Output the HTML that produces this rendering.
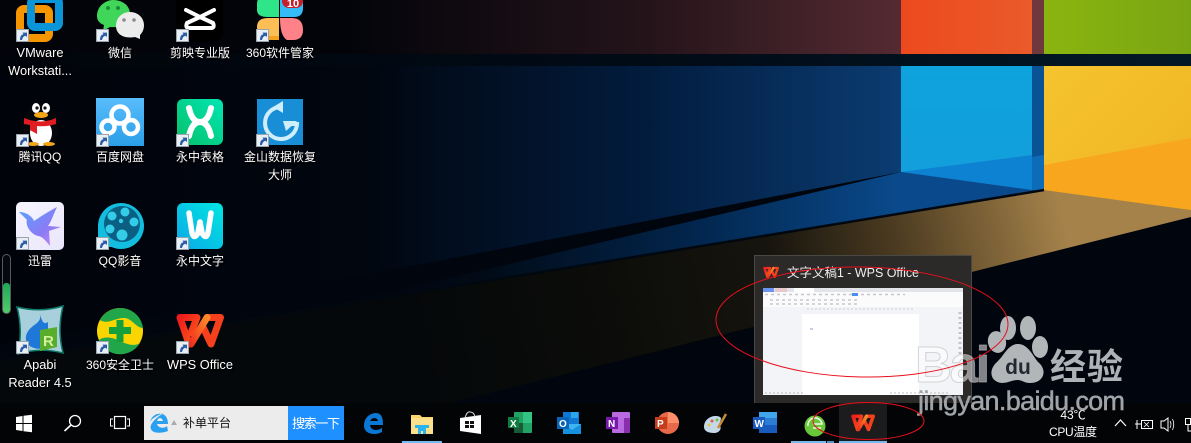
<!DOCTYPE html>
<html><head><meta charset="utf-8">
<style>
html,body{margin:0;padding:0;background:#02040a}
#r{position:relative;width:1191px;height:443px;overflow:hidden}
#r svg{position:absolute;left:0;top:0}
.l{position:absolute;width:80px;text-align:center;color:#fff;font:12px/18px "Liberation Sans","Noto Sans CJK SC",sans-serif;text-shadow:0 1px 2px #000,1px 1px 1px #000}
.e{font-size:12.8px}
</style></head><body><div id="r">
<svg width="1191" height="443" viewBox="0 0 1191 443" font-family="'Liberation Sans','Noto Sans CJK SC',sans-serif">
<defs>
<linearGradient id="w1" x1="0" x2="1" y1="0" y2="0"><stop offset="0" stop-color="#02040a"/><stop offset=".38" stop-color="#02040a"/><stop offset=".72" stop-color="#24141a"/><stop offset="1" stop-color="#552a32"/></linearGradient>
<linearGradient id="w2" x1="0" x2="1" y1="0" y2="0"><stop offset="0" stop-color="#01030a"/><stop offset=".4" stop-color="#01060f"/><stop offset=".72" stop-color="#021c3e"/><stop offset="1" stop-color="#0b3c72"/></linearGradient>
<linearGradient id="w3" gradientUnits="userSpaceOnUse" x1="300" y1="0" x2="901" y2="0"><stop offset="0" stop-color="#01040c"/><stop offset=".3" stop-color="#010a16"/><stop offset=".65" stop-color="#02254c"/><stop offset="1" stop-color="#0a4a8c"/></linearGradient>
<linearGradient id="bnd" x1="0" x2="1" y1="0" y2="0"><stop offset="0" stop-color="#01040a"/><stop offset=".6" stop-color="#010c18"/><stop offset="1" stop-color="#031826"/></linearGradient>
<linearGradient id="fl" x1="420" y1="350" x2="1060" y2="205" gradientUnits="userSpaceOnUse"><stop offset="0" stop-color="#05080a"/><stop offset=".3" stop-color="#0c0d0a"/><stop offset=".55" stop-color="#16140e"/><stop offset=".74" stop-color="#4a3a20"/><stop offset="1" stop-color="#a5824a"/></linearGradient>
<linearGradient id="bl" x1="0" x2="0" y1="0" y2="1"><stop offset="0" stop-color="#0ea3dc"/><stop offset="1" stop-color="#129fdc"/></linearGradient>
<linearGradient id="gn" x1="0" x2="1" y1="0" y2="0"><stop offset="0" stop-color="#8ab510"/><stop offset="1" stop-color="#7aa512"/></linearGradient>
<linearGradient id="og" x1="0" x2="1" y1="0" y2="0"><stop offset="0" stop-color="#ec4a1e"/><stop offset="1" stop-color="#ea5a2a"/></linearGradient>
<linearGradient id="ye" x1="0" x2="1" y1="0" y2="1"><stop offset="0" stop-color="#f4c42e"/><stop offset="1" stop-color="#f0b322"/></linearGradient>
<linearGradient id="g1" x1="0" y1="1" x2="1" y2="0"><stop offset="0" stop-color="#08bf68"/><stop offset="1" stop-color="#00e6b4"/></linearGradient>
<linearGradient id="g2" x1="0" y1="1" x2="1" y2="0"><stop offset="0" stop-color="#0ca8e8"/><stop offset="1" stop-color="#00e6e0"/></linearGradient>
<linearGradient id="g3" x1="0" y1="0" x2="0" y2="1"><stop offset="0" stop-color="#58bcfb"/><stop offset="1" stop-color="#2a9fe8"/></linearGradient>
<linearGradient id="g4" x1="0" y1="0" x2="1" y2="1"><stop offset="0" stop-color="#f6f5ff"/><stop offset="1" stop-color="#e9e6fb"/></linearGradient>
<linearGradient id="g5" x1="0" y1="0" x2="1" y2="1"><stop offset="0" stop-color="#5aa0ff"/><stop offset=".6" stop-color="#8a7cf4"/><stop offset="1" stop-color="#d088f4"/></linearGradient>
<linearGradient id="wp" x1="0" y1="0" x2="1" y2="1"><stop offset="0" stop-color="#ee1c1c"/><stop offset="1" stop-color="#ff5a1e"/></linearGradient>
<linearGradient id="wo" x1="1" y1="0" x2="0" y2="1"><stop offset="0" stop-color="#ff8a2a"/><stop offset="1" stop-color="#f0301e"/></linearGradient>
<linearGradient id="pg" x1="0" y1="0" x2="0" y2="1"><stop offset="0" stop-color="#1fa855"/><stop offset="1" stop-color="#52cc6a"/></linearGradient>
<symbol id="sc" viewBox="0 0 13 13"><rect x=".5" y=".5" width="12" height="12" fill="#e8eef4" stroke="#9aa4ac"/><path d="M4 11 C4 7 5.500 5.500 7.500 5.200 L6.500 3.600 L11 3.600 L11 8 L9.500 6.800 C8 7 6.500 8.500 6 11Z" fill="#2c5ba8"/></symbol>
<symbol id="wps" viewBox="0 0 48 36"><g fill="none" stroke-width="7" stroke-linejoin="round" stroke-linecap="round"><path d="M4 4.500 H21 L15 20 M4 4.500 L13 31" stroke="url(#wp)"/><path d="M31 4.500 H44.500 L35 31 L27 14" stroke="#f5401e"/><path d="M31 4.500 L15 31" stroke="url(#wo)"/></g></symbol>
</defs>

<!-- wallpaper -->
<rect width="1191" height="443" fill="#01050e"/>
<rect x="0" y="0" width="901" height="54" fill="url(#w1)"/>
<rect x="901" y="0" width="131" height="54" fill="url(#og)"/>
<rect x="1032" y="0" width="12" height="54" fill="#6f383c"/>
<rect x="1044" y="0" width="147" height="54" fill="url(#gn)"/>
<rect x="0" y="54" width="1191" height="12" fill="url(#bnd)"/>
<path d="M0 66 H901 V172 L0 345Z" fill="url(#w2)"/>
<path d="M0 361 L330 306 L901 172 L1044 190 L800 230 L400 295 L0 361Z" fill="url(#w3)"/>
<rect x="901" y="66" width="131" height="106" fill="url(#bl)"/>
<path d="M901 172 L1032 155 V190Z" fill="#0e82d2"/>
<rect x="1032" y="66" width="12" height="124" fill="#0a5296"/>
<path d="M1032 157 L1044 155 V190 H1032Z" fill="#0c6cb8"/>
<rect x="1044" y="66" width="147" height="150" fill="url(#ye)"/>
<path d="M1044 165 L1191 138 V210 L1044 190Z" fill="#f8a61e"/>
<!-- floor -->
<path d="M1044 190 L1191 210 V217 L450 403 H0 V362 L400 296 L800 231Z" fill="url(#fl)"/>
<path d="M1044 190 L800 230 L400 295 L0 361" stroke="#010810" stroke-width="2.500" fill="none"/>

<!-- row 1 icons -->
<rect x="20" y="9" width="29" height="29" rx="4" fill="none" stroke="#f59500" stroke-width="8"/>
<rect x="31" y="-1" width="28" height="28" rx="4" fill="none" stroke="#0a95d8" stroke-width="8"/>
<path d="M97 16 C97 5 107 0 113 0 C123 0 130 6 130 14 C130 24 120 28 110 27 L103 31 L104 25 C99 23 97 20 97 16Z" fill="#3fd659"/>
<circle cx="108" cy="8" r="2" fill="#1c8f36"/><circle cx="118" cy="8" r="2" fill="#1c8f36"/>
<path d="M116 26 C116 17 123 12 130 12 C138 12 144 18 144 25 C144 30 142 33 140 35 L140 39 L135 37 C125 39 116 35 116 26Z" fill="#ececec"/>
<circle cx="124" cy="20" r="1.800" fill="#8c8c8c"/><circle cx="134" cy="20" r="1.800" fill="#8c8c8c"/>
<rect x="176" y="-8" width="47" height="50" rx="9" fill="#000"/>
<path d="M186 10 L200 17 L214 10 M200 17 L187 23 Q185 28 189 28 H211 Q215 28 213 23 L200 17" fill="none" stroke="#fff" stroke-width="4" stroke-linejoin="round" stroke-linecap="round"/>
<path d="M257 17 V4 Q257 -4 265 -4 H279 V17 H268 Q257 17 257 10Z" fill="#2ee58a"/>
<path d="M280 -4 H303 V8 Q303 17 294 17 H280Z" fill="#35bcf8"/>
<path d="M279 18 V40 H270 Q257 40 257 27 Q257 18 268 18Z" fill="#fdbf55"/>
<path d="M257 27 Q257 40 270 40 H279 V36 H272 Q260 36 257 27Z" fill="#f5a21e"/>
<path d="M280 18 H292 Q303 18 303 30 Q303 40 293 40 H287 Q280 36 280 18Z" fill="#ff8288"/>
<rect x="282" y="-8" width="21" height="16" rx="7" fill="#c4202c"/>
<text x="293" y="7" font-size="11" font-weight="bold" fill="#fff" text-anchor="middle">10</text>

<!-- row 2 -->
<ellipse cx="41" cy="127" rx="18" ry="24" fill="#06070a"/>
<ellipse cx="41" cy="133" rx="11" ry="13" fill="#fff"/>
<ellipse cx="36" cy="108" rx="4" ry="5" fill="#fff"/><ellipse cx="46" cy="108" rx="4" ry="5" fill="#fff"/>
<circle cx="37" cy="108" r="1.600" fill="#111"/><circle cx="45" cy="108" r="1.600" fill="#111"/>
<ellipse cx="41" cy="115" rx="7" ry="3" fill="#f2a618"/>
<path d="M24 118 Q41 125 56 118 L56 124 Q46 127 37 126 V134 L30 130 V125 L24 124Z" fill="#e01c22"/>
<ellipse cx="33" cy="144" rx="6" ry="2" fill="#f2a618"/><ellipse cx="49" cy="144" rx="6" ry="2" fill="#f2a618"/>
<rect x="96" y="98" width="48" height="48" fill="url(#g3)"/>
<g fill="none" stroke="#fff" stroke-width="4.500"><circle cx="120" cy="115" r="8.500"/><circle cx="108" cy="127" r="6.500"/><circle cx="131" cy="127" r="7"/></g>
<rect x="177" y="99" width="46" height="46" rx="6" fill="url(#g1)"/>
<path d="M189 108 Q192 122 200 122 Q208 122 211 108 M189 136 Q192 122 200 122 Q208 122 211 136" fill="none" stroke="#fff" stroke-width="6" stroke-linecap="round"/>
<rect x="257" y="99" width="46" height="46" fill="#188ed6"/>
<path d="M281 107 A16 16 0 1 0 297 124 H285" fill="none" stroke="#cfeefb" stroke-width="4"/>
<path d="M273 107 L283 101 V113Z M283 121 H297 L286 131Z" fill="#cfeefb"/>

<!-- row 3 -->
<rect x="16" y="202" width="48" height="48" rx="5" fill="url(#g4)"/>
<path d="M19 212 C26 212 32 216 34 221 C40 217 46 213 57 207 C52 218 51 222 48 226 L61 227 L49 231 L50 246 C46 241 42 236 38 236 C30 234 25 224 27 220Z" fill="url(#g5)"/>
<circle cx="121" cy="226" r="23" fill="#12bde0"/>
<path d="M98 226 V247 H120Z" fill="#12bde0"/>
<circle cx="122" cy="224" r="18" fill="#0a5f82"/>
<g fill="#34cde8"><circle cx="125" cy="212" r="4.500"/><circle cx="112" cy="216" r="4.500"/><circle cx="134" cy="222" r="4.500"/><circle cx="110" cy="229" r="4.500"/><circle cx="122" cy="235" r="5.500"/><circle cx="121" cy="221" r="2.200"/></g>
<rect x="177" y="203" width="46" height="46" rx="6" fill="url(#g2)"/>
<path d="M189 213 L192 233 Q194 240 198 233 L200 222 L202 233 Q206 240 208 233 L211 213" fill="none" stroke="#fff" stroke-width="5.500" stroke-linecap="round" stroke-linejoin="round"/>

<!-- row 4 -->
<path d="M17 307 Q40 313 63 306 Q57 330 63 353 Q40 347 18 354 Q23 330 17 307Z" fill="#a8d0dc" stroke="#0e7a6a" stroke-width="1.500"/>
<path d="M38 310 C46 325 30 322 26 336 C24 348 40 352 48 346 V322 C42 326 42 318 38 310Z" fill="#1f78d8"/>
<path d="M40 330 L57 327 V347 L40 351Z" fill="#58ad2a"/>
<text x="43" y="346" font-size="15" font-weight="bold" fill="#d4f0a0">R</text>
<circle cx="120" cy="331" r="23" fill="#fbd500"/>
<path d="M100 320 A23 23 0 0 1 143 328 C136 328 132 318 124 318 C114 318 108 325 100 320Z" fill="#22a64a"/>
<path d="M99 340 A23 23 0 0 0 140 343 C134 347 126 344 120 341 C112 337 104 336 99 340Z" fill="#22a64a"/>
<path d="M116.500 320 H123.500 V327 H131 V334 H123.500 V342 H116.500 V334 H109 V327 H116.500Z" fill="#15a03e"/>
<use href="#wps" x="176" y="313" width="48" height="36"/>

<!-- shortcut marks -->
<use href="#sc" x="16" y="29" width="13" height="13"/><use href="#sc" x="96" y="29" width="13" height="13"/><use href="#sc" x="176" y="29" width="13" height="13"/><use href="#sc" x="256" y="29" width="13" height="13"/>
<use href="#sc" x="16" y="134" width="13" height="13"/><use href="#sc" x="96" y="134" width="13" height="13"/><use href="#sc" x="176" y="134" width="13" height="13"/><use href="#sc" x="256" y="134" width="13" height="13"/>
<use href="#sc" x="16" y="237" width="13" height="13"/><use href="#sc" x="96" y="237" width="13" height="13"/><use href="#sc" x="176" y="237" width="13" height="13"/>
<use href="#sc" x="16" y="341" width="13" height="13"/><use href="#sc" x="96" y="341" width="13" height="13"/><use href="#sc" x="176" y="341" width="13" height="13"/>

<!-- side gadget -->
<rect x="2.500" y="254.500" width="8" height="59" rx="4" fill="#05080c" stroke="#565a5c"/>
<rect x="3" y="283" width="7" height="30" rx="3" fill="url(#pg)"/>

<!-- popup -->
<rect x="754.500" y="255.500" width="217" height="148" fill="#2c2a28" stroke="#4a4844"/>
<use href="#wps" x="763" y="266" width="16" height="13"/>
<text x="787" y="277" font-size="12.500" fill="#eee" textLength="132">文字文稿1 - WPS Office</text>
<rect x="763" y="288" width="200" height="107" fill="#f3f4f7"/>
<rect x="763" y="288" width="200" height="4" fill="#e2e4ea"/>
<rect x="763" y="288" width="11" height="4" fill="#6a94f0"/>
<rect x="775" y="288" width="12" height="4" fill="#e8c8cc"/>
<rect x="794" y="288" width="20" height="4" fill="#fff"/>
<rect x="763" y="292" width="200" height="15" fill="#fbfbfc"/>
<path d="M765 294.500 H905 M770 300 H860 M770 304 H860" stroke="#9aa0a8" stroke-width="1.500" stroke-dasharray="3 3" opacity=".55"/>
<rect x="852" y="293" width="6" height="3" fill="#4a8cf0"/>
<path d="M807 309 H915" stroke="#b8bcc4" stroke-dasharray="2 2" opacity=".7"/>
<rect x="802" y="314" width="117" height="81" fill="#fff"/>
<rect x="810" y="328" width="3" height="2" fill="#c8ccec"/>
<path d="M960 312 V355" stroke="#a0a4ac" stroke-width="3" stroke-dasharray="2 3" opacity=".6"/>
<path d="M765 393 H805 M890 393 H950" stroke="#a0a4ac" stroke-dasharray="2 2" opacity=".7"/>

<!-- taskbar -->
<rect x="0" y="403" width="1191" height="40" fill="#030406"/>
<path d="M16 417 L22.500 416 V423 H16Z M23.500 415.800 L32 414.700 V423 H23.500Z M16 424 H22.500 V431 L16 430Z M23.500 424 H32 V432.300 L23.500 431.200Z" fill="#fff"/>
<circle cx="75" cy="421" r="5.500" fill="none" stroke="#fff" stroke-width="1.300"/><path d="M71 425 L64.500 431" stroke="#fff" stroke-width="1.600"/>
<rect x="114.500" y="416.500" width="11" height="12" fill="none" stroke="#fff" stroke-width="1.200"/><path d="M113 419 H110.500 V426 H113 M127 419 H129.500 V426 H127" fill="none" stroke="#fff"/>
<rect x="144" y="406" width="144" height="34" fill="#ececec"/>
<rect x="288" y="406" width="56" height="34" fill="#1e90ff"/>
<path d="M168 431 C160 434 152 433 151 429 C149 425 155 418 164 413 C155 416 150 420 150 423 C151 415 158 413 161 414 C166 414 168 419 168 424 H157 C158 428 164 429 167 426Z M157 421 H163 C162 417 158 417 157 421Z" fill="#2aa0f0" fill-rule="evenodd"/>
<path d="M171 425 L174 420 L177 425Z" fill="#a8acb0"/>
<text x="183" y="427" font-size="12" fill="#111">补单平台</text>
<text x="292" y="428" font-size="13" fill="#fff" textLength="48">搜索一下</text>
<path d="M364 426 C364 416 372 413 376 413 C382 413 383 419 383 425 H370 C371 431 377 431 382 428 V432 C375 436 364 434 364 426Z M370 421 H378 C377 417 372 417 370 421Z" fill="#0a78d4" fill-rule="evenodd"/>
<!-- explorer -->
<path d="M411 415 H420 L422 417 H433 V432 Q433 434 431 434 H413 Q411 434 411 432Z" fill="#fbd36a"/>
<rect x="411" y="418" width="22" height="16" fill="#fde08a"/>
<path d="M418 434 V428 H426 V434 H423 V431 H421 V434Z" fill="#2bb4ee"/><rect x="415" y="425" width="14" height="3" fill="#2bb4ee"/>
<rect x="402" y="441" width="40" height="2" fill="#76b9ed"/>
<!-- store -->
<path d="M460 418 L481 415 V434 L460 431Z" fill="#fff"/>
<path d="M465 418 Q467 411 470 412 Q474 412 475 417" fill="none" stroke="#ddd"/>
<path d="M465 421 H469 V424 H465Z M470 421 H474 V424 H470Z M465 425 H469 V428 H465Z M470 425 H474 V428 H470Z" fill="#111"/>
<!-- excel -->
<rect x="514" y="412" width="18" height="21" rx="1" fill="#21a366"/><rect x="523" y="412" width="9" height="11" fill="#33c481"/><rect x="514" y="423" width="9" height="10" fill="#185c37"/>
<rect x="508" y="417" width="11" height="11" fill="#107c41"/><text x="510" y="427" font-size="10" font-weight="bold" fill="#fff">X</text>
<!-- outlook -->
<rect x="563" y="412" width="16" height="12" fill="#0f78d4"/><rect x="571" y="412" width="7" height="6" fill="#28a8ea"/>
<path d="M563 425 L581 424 V434 H563Z" fill="#1490df"/><path d="M563 424 L581 424 L572 430Z" fill="#40b4f0"/>
<rect x="557" y="417" width="12" height="12" fill="#0a64b8"/><text x="559" y="427" font-size="10" font-weight="bold" fill="#fff">O</text>
<!-- onenote -->
<rect x="612" y="412" width="18" height="21" rx="1" fill="#ba6ae0"/><rect x="624" y="418" width="6" height="15" fill="#8a2eb0"/>
<rect x="606" y="417" width="12" height="12" fill="#7719aa"/><text x="608" y="427" font-size="10" font-weight="bold" fill="#fff">N</text>
<!-- ppt -->
<circle cx="668" cy="423" r="11" fill="#e8694a"/><path d="M668 412 A11 11 0 0 1 679 423 H668Z" fill="#ff8f6b"/>
<rect x="655" y="417" width="12" height="12" fill="#c43e1c"/><text x="657" y="427" font-size="10" font-weight="bold" fill="#fff">P</text>
<!-- paint -->
<path d="M704 427 C704 418 714 414 720 417 C723 419 718 423 720 426 C722 429 719 433 714 433 C708 433 704 431 704 427Z" fill="#c4d8e8"/>
<circle cx="712" cy="421" r="1.500" fill="#e05a4a"/><circle cx="717" cy="420" r="1.500" fill="#6ac04a"/><circle cx="709" cy="425" r="1.500" fill="#e8c840"/>
<path d="M718 428 L726 414" stroke="#c88a3a" stroke-width="2.500"/>
<!-- word -->
<rect x="759" y="412" width="18" height="21" rx="1" fill="#2b7cd3"/><rect x="759" y="412" width="18" height="6" fill="#41a5ee"/><rect x="759" y="425" width="18" height="8" fill="#185abd"/>
<rect x="753" y="417" width="12" height="12" fill="#185abd"/><text x="754.500" y="427" font-size="10" font-weight="bold" fill="#fff">W</text>
<!-- green app -->
<circle cx="815" cy="426" r="10.500" fill="#68c83a"/><path d="M808 426 A7 7 0 0 1 822 424 H813 M813 428 H821" fill="none" stroke="#eefae8" stroke-width="1.500"/>
<rect x="791" y="441" width="35" height="2" fill="#76b9ed"/><rect x="827" y="441" width="7" height="2" fill="#5a92ba"/>
<!-- WPS active -->
<rect x="839" y="403" width="48" height="38" fill="#1c1c1c"/>
<rect x="839" y="441" width="48" height="2" fill="#76b9ed"/>
<use href="#wps" x="851" y="414" width="24" height="18"/>
<!-- tray -->
<text x="1073" y="419" font-size="12" fill="#fff" text-anchor="middle">43℃</text>
<text x="1049" y="436" font-size="12" fill="#fff" textLength="48">CPU温度</text>
<path d="M1115 426 L1120.500 420 L1126 426" fill="none" stroke="#fff" stroke-width="1.200"/>
<path d="M1137 420 V429 M1135 424 H1141" stroke="#fff"/><rect x="1141.500" y="420.500" width="11" height="8" fill="none" stroke="#fff"/><path d="M1144 422 L1149 427 M1149 422 L1144 427" stroke="#fff" stroke-width=".8"/>
<path d="M1161 421 H1164 L1168 418 V431 L1164 428 H1161Z" fill="none" stroke="#fff"/><path d="M1170 421 Q1172 424 1170 428 M1172.500 419 Q1175 424 1172.500 430" fill="none" stroke="#fff" stroke-width=".8"/>
<rect x="1185.500" y="418.500" width="5" height="6" fill="none" stroke="#fff"/><path d="M1188 425 V431 H1191" fill="none" stroke="#fff"/>

<!-- watermark -->
<g fill="#b2b6b9">
<ellipse cx="997" cy="342" rx="9" ry="11" transform="rotate(-15 997 342)"/><ellipse cx="1008" cy="328" rx="8" ry="12"/><ellipse cx="1028" cy="328" rx="8" ry="12"/><ellipse cx="1040" cy="347" rx="8" ry="11"/>
<path d="M1018 344 C1028 344 1033 356 1038 362 C1048 370 1044 383 1030 383 C1024 383 1022 380 1018 380 C1012 380 1008 383 1002 383 C990 382 988 370 997 362 C1004 356 1008 344 1018 344Z"/>
</g>
<text x="1018" y="374" font-size="21" font-weight="bold" fill="#0a1018" text-anchor="middle" opacity=".85">du</text>
<text x="915" y="382" font-size="51" font-weight="bold" fill="#fff" fill-opacity=".5" stroke="#bbb" stroke-opacity=".6" stroke-width="1" textLength="75">Bai</text>
<text x="1050" y="379" font-size="36" font-weight="bold" fill="#aeb2b6" textLength="73">经验</text>
<text x="918" y="410" font-size="27" fill="#a0a4a8" stroke="#a0a4a8" stroke-width=".5" textLength="207">jingyan.baidu.com</text>

<!-- red annotations -->
<ellipse cx="862" cy="322" rx="146" ry="55" fill="none" stroke="#e8101c" transform="rotate(1 862 322)"/>
<ellipse cx="868.500" cy="421" rx="55.500" ry="18.500" fill="none" stroke="#e8101c"/>
</svg>

<div class="l e" style="left:0;top:44px">VMware<br>Workstati...</div>
<div class="l" style="left:80px;top:44px">微信</div>
<div class="l" style="left:160px;top:44px">剪映专业版</div>
<div class="l" style="left:240px;top:44px">360软件管家</div>
<div class="l" style="left:0;top:148px">腾讯QQ</div>
<div class="l" style="left:80px;top:148px">百度网盘</div>
<div class="l" style="left:160px;top:148px">永中表格</div>
<div class="l" style="left:240px;top:148px">金山数据恢复<br>大师</div>
<div class="l" style="left:0;top:252px">迅雷</div>
<div class="l" style="left:80px;top:252px">QQ影音</div>
<div class="l" style="left:160px;top:252px">永中文字</div>
<div class="l e" style="left:0;top:356px">Apabi<br>Reader 4.5</div>
<div class="l" style="left:80px;top:356px">360安全卫士</div>
<div class="l e" style="left:160px;top:356px">WPS Office</div>
</div></body></html>
